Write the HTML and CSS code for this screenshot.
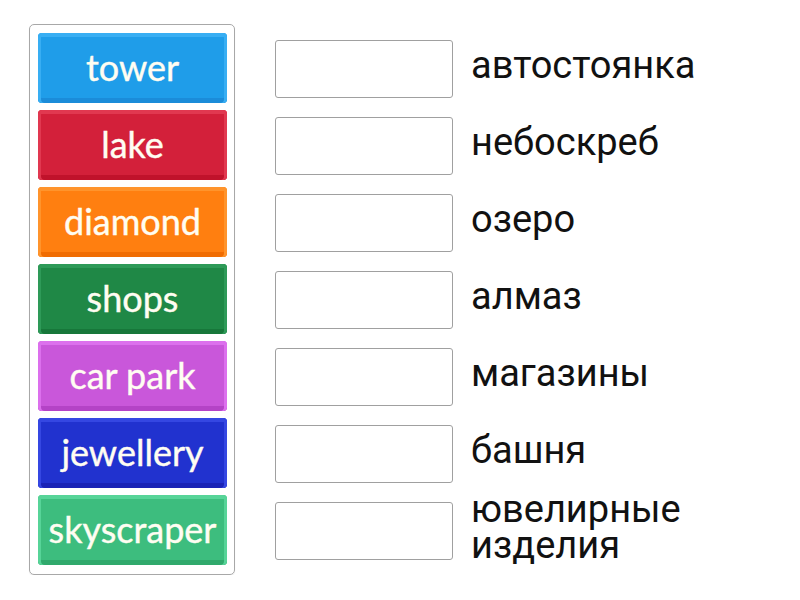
FILE: index.html
```html
<!DOCTYPE html>
<html>
<head>
<meta charset="utf-8">
<link rel="stylesheet" href="styles.css">
</head>
<body>
<div class="page">
  <div class="bank">
    <div class="tile t-blue">tower</div>
    <div class="tile t-red">lake</div>
    <div class="tile t-orange">diamond</div>
    <div class="tile t-green">shops</div>
    <div class="tile t-purple">car park</div>
    <div class="tile t-navy">jewellery</div>
    <div class="tile t-mint">skyscraper</div>
  </div>
  <div class="targets">
    <div class="row"><div class="slot"></div><div class="label">автостоянка</div></div>
    <div class="row"><div class="slot"></div><div class="label">небоскреб</div></div>
    <div class="row"><div class="slot"></div><div class="label">озеро</div></div>
    <div class="row"><div class="slot"></div><div class="label">алмаз</div></div>
    <div class="row"><div class="slot"></div><div class="label">магазины</div></div>
    <div class="row"><div class="slot"></div><div class="label">башня</div></div>
    <div class="row"><div class="slot"></div><div class="label">ювелирные изделия</div></div>
  </div>
</div>
</body>
</html>
```
FILE: styles.css
```css
html, body {
  margin: 0;
  padding: 0;
  background: #ffffff;
}
.page {
  display: flex;
  align-items: flex-start;
  padding: 24px 0 0 29px;
  gap: 40px;
}
.bank {
  width: 189px;
  padding: 8px 7px 9px 8px;
  border: 1px solid #a8a8a8;
  border-radius: 5px;
  display: flex;
  flex-direction: column;
  gap: 7px;
  box-shadow: 0 1px 1px rgba(0,0,0,0.08);
}
.tile {
  height: 70px;
  border-radius: 4px;
  display: flex;
  align-items: center;
  justify-content: center;
  font-family: Lato, "Open Sans", sans-serif;
  font-size: 36px;
  -webkit-text-stroke: 0.4px #fffdf2;
  color: #fffdf2;
  background: var(--c);
  box-shadow:
    inset 0 4px 0 var(--l),
    inset 3px 0 0 var(--l),
    inset -3px 0 0 var(--l),
    inset 0 -5px 0 var(--d);
  white-space: nowrap;
  padding-bottom: 3px;
  box-sizing: border-box;
}
.t-blue   { --c: #1f9de9; --l: #38aef3; --d: #1b8cd9; }
.t-red    { --c: #d3203a; --l: #e13850; --d: #c0122b; }
.t-orange { --c: #ff7f10; --l: #ff942c; --d: #f06c02; }
.t-green  { --c: #1f8846; --l: #2e9a58; --d: #17773a; }
.t-purple { --c: #c957da; --l: #dc70ed; --d: #b443c6; }
.t-navy   { --c: #2132cf; --l: #3547e2; --d: #1a23b6; }
.t-mint   { --c: #3dbd7e; --l: #57d498; --d: #30a96c; }

.targets {
  padding-top: 9px;
  display: flex;
  flex-direction: column;
  gap: 7px;
}
.row {
  height: 70px;
  display: flex;
  align-items: center;
}
.slot {
  width: 176px;
  height: 56px;
  border: 1px solid #a0a0a0;
  border-radius: 3px;
  background: #fff;
  flex: none;
  margin-top: 1px;
}
.label {
  margin-left: 18px;
  font-family: Roboto, "Liberation Sans", sans-serif;
  font-size: 38px;
  line-height: 36px;
  color: #111;
  width: 240px;
  padding-bottom: 6px;
}
```
